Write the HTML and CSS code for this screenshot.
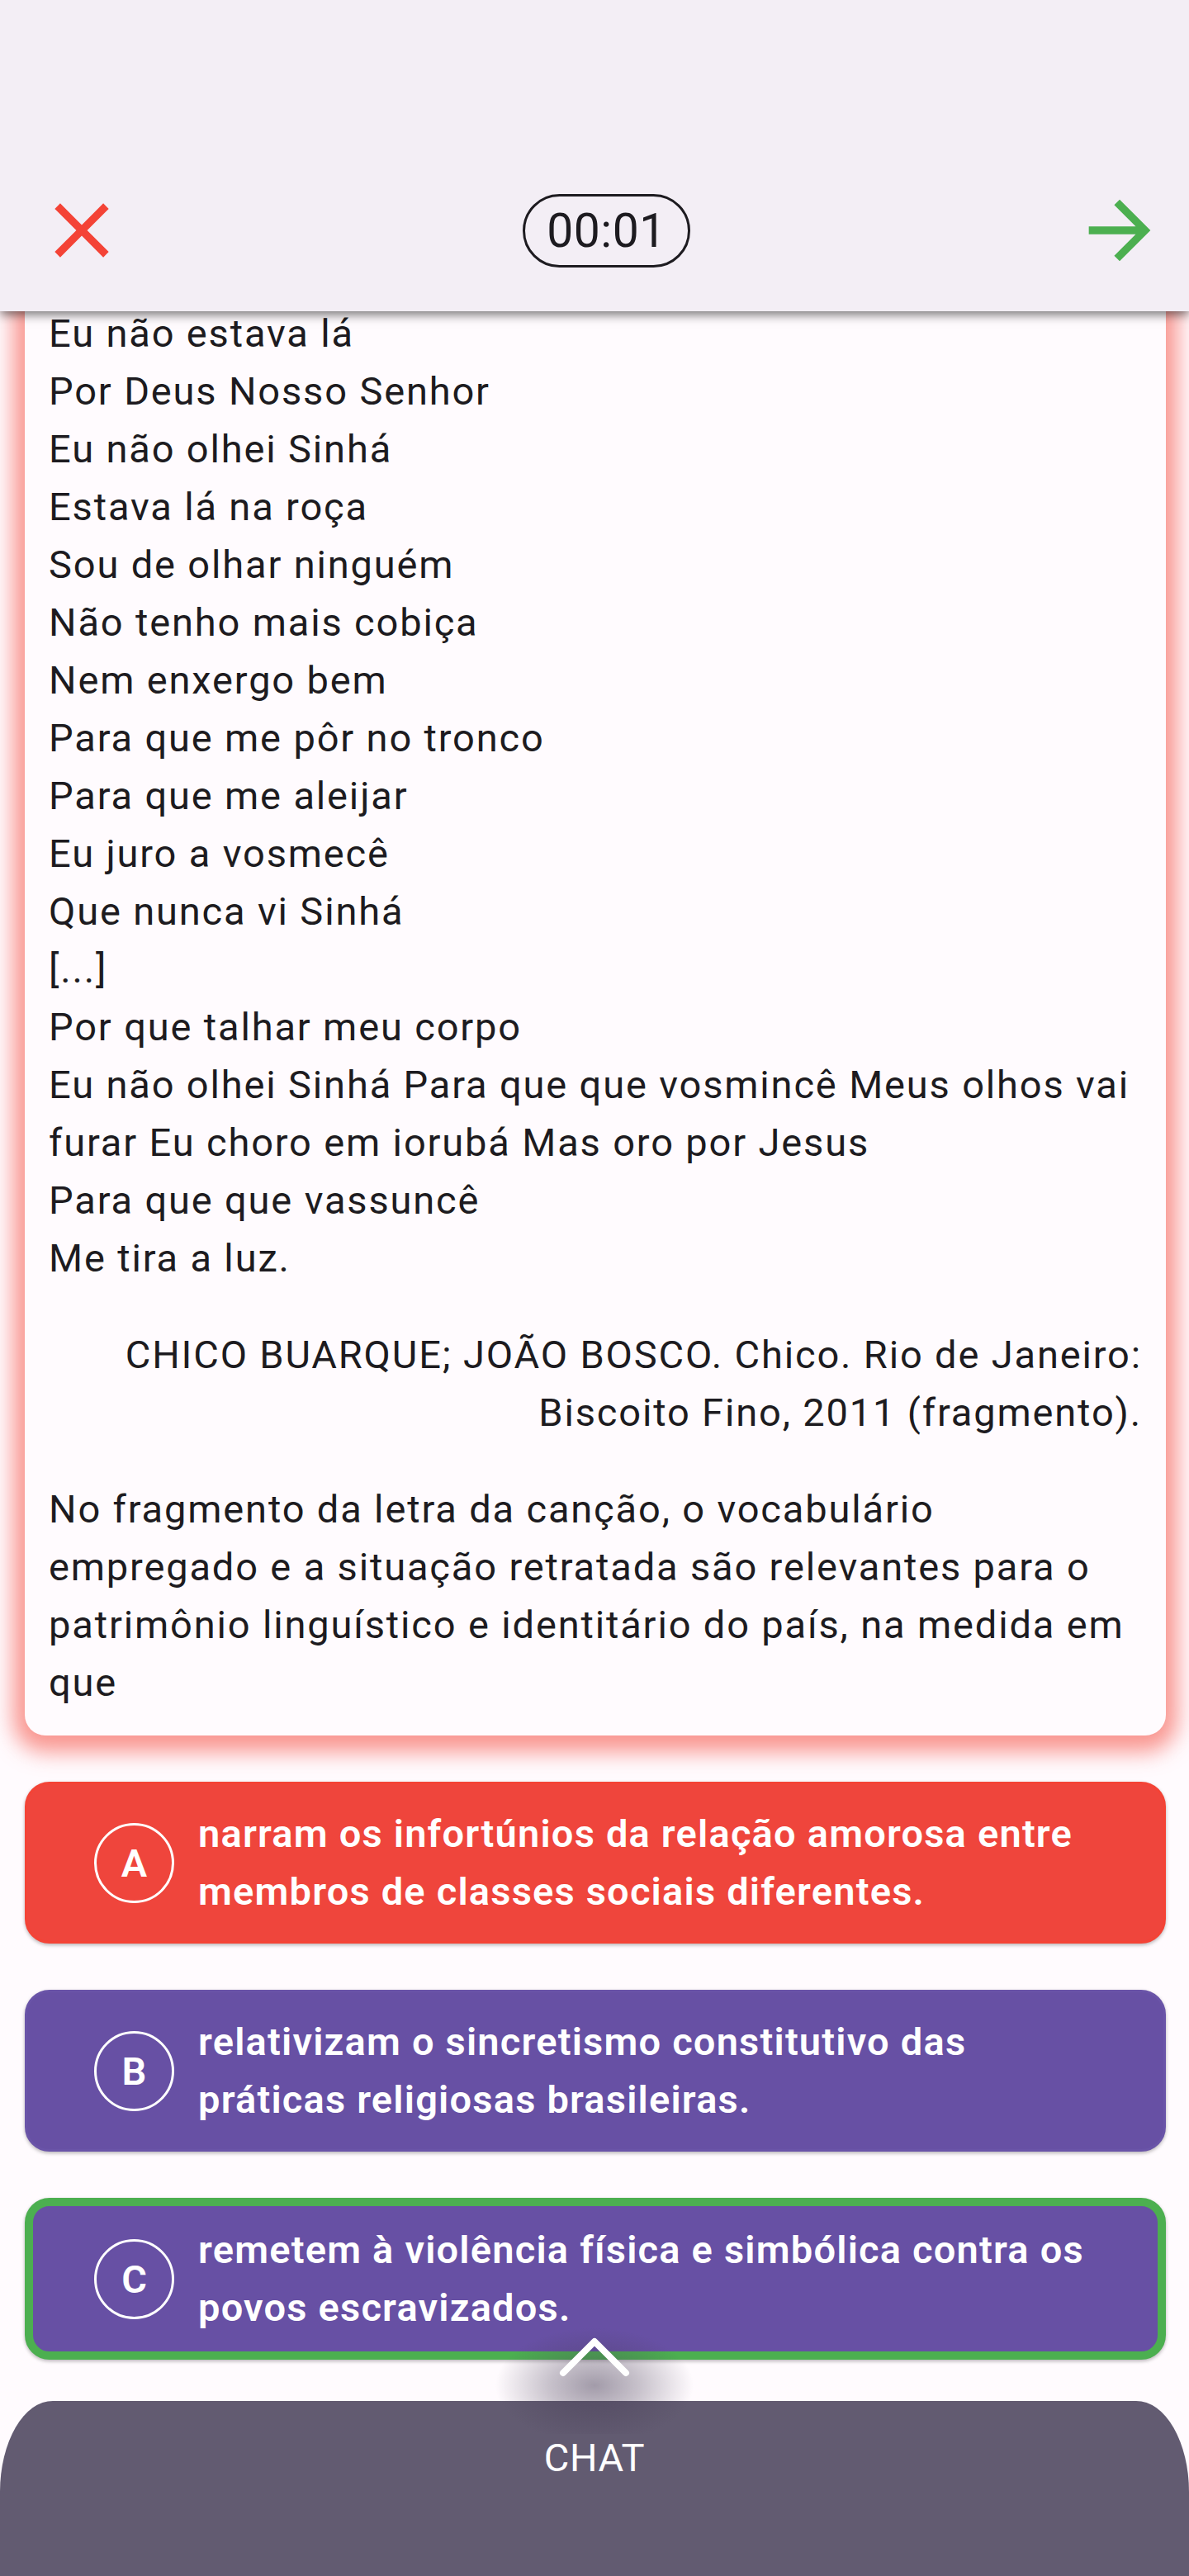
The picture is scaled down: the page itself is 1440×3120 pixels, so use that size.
FILE: index.html
```html
<!DOCTYPE html>
<html lang="pt-BR">
<head>
<meta charset="utf-8">
<title>Questão</title>
<link rel="stylesheet" href="styles.css">
</head>
<body>
<div class="screen">
  <header class="topbar">
    <div class="toolbar">
      <button class="icon-btn close" aria-label="Fechar">
        <svg viewBox="0 0 24 24" width="112" height="112"><path fill="#f44336" d="M19 6.41L17.59 5 12 10.59 6.41 5 5 6.41 10.59 12 5 17.59 6.41 19 12 13.41 17.59 19 19 17.59 13.41 12z"/></svg>
      </button>
      <div class="timer">00:01</div>
      <button class="icon-btn next" aria-label="Próxima">
        <svg viewBox="0 0 24 24" width="112" height="112"><path fill="#4caf50" d="M12 4l-1.41 1.41L16.17 11H4v2h12.17l-5.58 5.59L12 20l8-8z"/></svg>
      </button>
    </div>
  </header>

  <main class="content">
    <article class="question-card">
      <div class="poem">
        <p>Eu não estava lá</p>
        <p>Por Deus Nosso Senhor</p>
        <p>Eu não olhei Sinhá</p>
        <p>Estava lá na roça</p>
        <p>Sou de olhar ninguém</p>
        <p>Não tenho mais cobiça</p>
        <p>Nem enxergo bem</p>
        <p>Para que me pôr no tronco</p>
        <p>Para que me aleijar</p>
        <p>Eu juro a vosmecê</p>
        <p>Que nunca vi Sinhá</p>
        <p>[...]</p>
        <p>Por que talhar meu corpo</p>
        <p>Eu não olhei Sinhá Para que que vosmincê Meus olhos vai furar Eu choro em iorubá Mas oro por Jesus</p>
        <p>Para que que vassuncê</p>
        <p>Me tira a luz.</p>
      </div>
      <p class="citation">CHICO BUARQUE; JOÃO BOSCO. Chico. Rio de Janeiro: Biscoito Fino, 2011 (fragmento).</p>
      <p class="prompt">No fragmento da letra da canção, o vocabulário empregado e a situação retratada são relevantes para o patrimônio linguístico e identitário do país, na medida em que</p>
    </article>

    <div class="options">
      <div class="option wrong">
        <span class="letter">A</span>
        <span class="option-text">narram os infortúnios da relação amorosa entre membros de classes sociais diferentes.</span>
      </div>
      <div class="option">
        <span class="letter">B</span>
        <span class="option-text">relativizam o sincretismo constitutivo das práticas religiosas brasileiras.</span>
      </div>
      <div class="option correct">
        <span class="letter">C</span>
        <span class="option-text">remetem à violência física e simbólica contra os povos escravizados.</span>
      </div>
    </div>
  </main>

  <footer class="chat">
    <div class="handle">
      <div class="handle-shadow"></div>
      <svg class="chevron" viewBox="0 0 90 52" width="90" height="52"><path d="M7 45 L45 7 L83 45" fill="none" stroke="#ffffff" stroke-width="8" stroke-linecap="round" stroke-linejoin="round"/></svg>
    </div>
    <div class="chat-label">CHAT</div>
  </footer>
</div>
</body>
</html>
```

FILE: styles.css
```css
* {
  box-sizing: border-box;
}

html, body {
  margin: 0;
  padding: 0;
}

body {
  background: #fffbfe;
  font-family: Roboto, "Noto Sans", "Liberation Sans", sans-serif;
  color: #1d1b20;
}

.screen {
  position: relative;
  width: 1440px;
  height: 3120px;
  overflow: hidden;
  display: flex;
  flex-direction: column;
}

/* ---------- top bar (overlays the scrolled content) ---------- */
.topbar {
  position: absolute;
  top: 0;
  left: 0;
  right: 0;
  height: 377px;
  background: #f3eef5;
  box-shadow: 0 4px 12px rgba(0, 0, 0, 0.55);
  z-index: 5;
  display: flex;
  align-items: flex-end;
}

.toolbar {
  width: 100%;
  height: 196px;
  display: flex;
  align-items: center;
  justify-content: space-between;
  padding: 0 28px 0 43px;
}

.icon-btn {
  width: 112px;
  height: 112px;
  padding: 0;
  border: 0;
  background: none;
  display: flex;
  align-items: center;
  justify-content: center;
}

.icon-btn svg {
  display: block;
}

.timer {
  margin-left: 14px;
  width: 203px;
  height: 89px;
  border: 3px solid #1d1b20;
  border-radius: 45px;
  display: flex;
  align-items: center;
  justify-content: center;
  font-size: 57px;
  letter-spacing: 0.5px;
  color: #1d1b20;
}

/* ---------- content ---------- */
.content {
  position: relative;
  z-index: 1;
  padding: 340px 28px 0 30px;
  display: flex;
  flex-direction: column;
  gap: 56px;
}

.question-card {
  position: relative;
  background: #fffbfe;
  border-radius: 25px;
  padding: 29px;
  box-shadow: 0 6px 26px 14px rgba(244, 67, 54, 0.55);
  font-size: 47px;
  line-height: 70px;
  letter-spacing: 1.85px;
}

.question-card p {
  margin: 0;
}

.poem {
  display: flex;
  flex-direction: column;
}

.citation {
  margin-top: 47px !important;
  text-align: right;
  padding-left: 60px;
}

.prompt {
  margin-top: 47px !important;
}

.options {
  display: flex;
  flex-direction: column;
  gap: 56px;
}

.option {
  display: flex;
  align-items: center;
  gap: 29px;
  min-height: 196px;
  padding: 25px 64px 25px 81px;
  border: 3px solid #6a54a8;
  border-radius: 30px;
  background: #6750a4;
  color: #ffffff;
  box-shadow: 0 2px 4px rgba(0, 0, 0, 0.28);
}

.option.wrong {
  background: #ef453c;
  border-color: #f44336;
}

.option.correct {
  border: 10px solid #4caf50;
  padding: 18px 57px 18px 74px;
  min-height: 195px;
}

.letter {
  flex: 0 0 97px;
  width: 97px;
  height: 97px;
  border: 3px solid #ffffff;
  border-radius: 50%;
  display: flex;
  align-items: center;
  justify-content: center;
  font-size: 47px;
  font-weight: 600;
  line-height: 1;
}

.option-text {
  font-size: 47px;
  line-height: 70px;
  font-weight: 600;
  letter-spacing: 1.2px;
}

/* ---------- chat sheet ---------- */
.chat {
  position: relative;
  z-index: 2;
  margin-top: auto;
  height: 212px;
  background: #625b71;
  border-radius: 64px 64px 0 0 / 110px 110px 0 0;
  color: #ffffff;
  display: flex;
  justify-content: center;
  padding-top: 34px;
}

.chat-label {
  font-size: 47px;
  line-height: 70px;
  letter-spacing: 0.5px;
}

.handle {
  position: absolute;
  left: 620px;
  top: -100px;
  width: 200px;
  height: 100px;
  display: flex;
  justify-content: center;
}

.handle-shadow {
  position: absolute;
  left: -20px;
  top: 0;
  width: 240px;
  height: 140px;
  background: radial-gradient(ellipse 50% 50% at 50% 58%, rgba(70, 60, 85, 0.5) 0%, rgba(70, 60, 85, 0.3) 45%, rgba(70, 60, 85, 0) 100%);
}

.chevron {
  position: relative;
  margin-top: 21px;
  display: block;
}
```
